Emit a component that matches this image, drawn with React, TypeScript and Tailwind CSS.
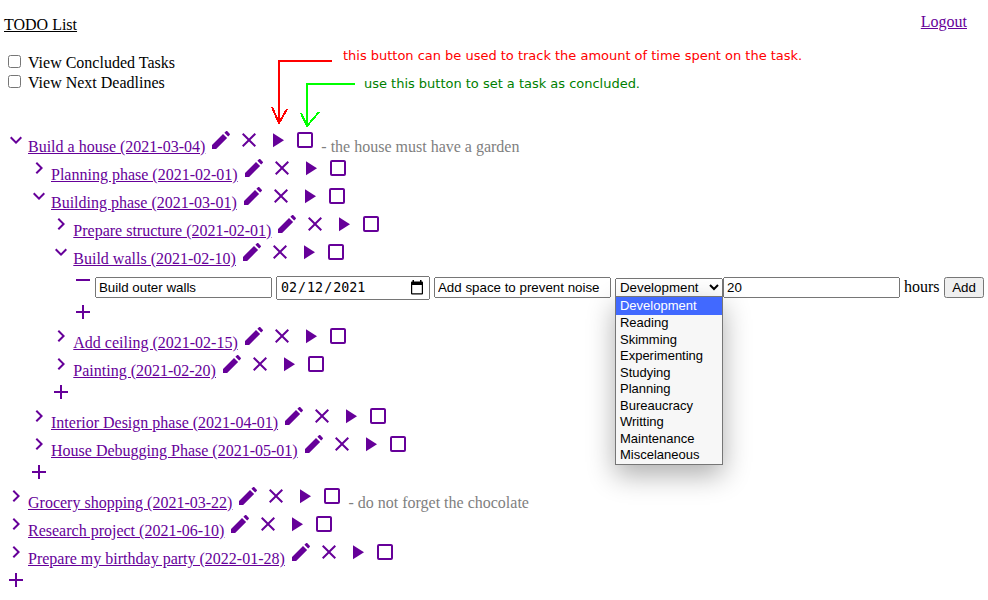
import React from "react";

const PATHS = {
  right: "M8.59,16.58L13.17,12L8.59,7.41L10,6L16,12L10,18L8.59,16.58Z",
  down: "M7.41,8.58L12,13.17L16.59,8.58L18,10L12,16L6,10L7.41,8.58Z",
  pencil:
    "M20.71,7.04C21.1,6.65 21.1,6 20.71,5.63L18.37,3.29C18,2.9 17.35,2.9 16.96,3.29L15.4,4.84L19.15,8.59M3,16.9V21H7.1L18.1,10L14,5.9L3,16.9Z",
  close:
    "M19,6.41L17.59,5L12,10.59L6.41,5L5,6.41L10.59,12L5,17.59L6.41,19L12,13.41L17.59,19L19,17.59L13.41,12L19,6.41Z",
  play: "M8,5.14V19.14L19,12.14L8,5.14Z",
  square:
    "M18,18H6V6H18M18,4H6A2,2 0 0,0 4,6V18A2,2 0 0,0 6,20H18A2,2 0 0,0 20,18V6C20,4.89 19.1,4 18,4Z",
  plus: "M19,13H13V19H11V13H5V11H11V5H13V11H19V13Z",
  minus: "M19,13H5V11H19V13Z",
};

function Icon({ name }: { name: keyof typeof PATHS }) {
  return (
    <svg viewBox="0 0 24 24" className="h-6 w-6 shrink-0 fill-[#660099]">
      <path d={PATHS[name]} />
    </svg>
  );
}

function Task({ title, open, note }: { title: string; open?: boolean; note?: string }) {
  return (
    <div className="flex h-7 items-start whitespace-nowrap">
      <Icon name={open ? "down" : "right"} />
      <a className="mt-[10px] text-[#660099] underline">{title}</a>
      <div className="ml-1 flex gap-1">
        <Icon name="pencil" />
        <Icon name="close" />
        <Icon name="play" />
        <Icon name="square" />
      </div>
      {note && <span className="mt-[10px] ml-1 text-[#808080]">{note}</span>}
    </div>
  );
}

function AddRow() {
  return (
    <div className="flex h-6">
      <Icon name="plus" />
    </div>
  );
}

const OPTIONS = [
  "Development",
  "Reading",
  "Skimming",
  "Experimenting",
  "Studying",
  "Planning",
  "Bureaucracy",
  "Writting",
  "Maintenance",
  "Miscelaneous",
];

function KindSelect() {
  return (
    <div className="relative mt-[10px] ml-1 w-[108px] shrink-0">
      <select className="[all:revert] block! w-[108px]! m-0!" defaultValue="Development">
        {OPTIONS.map((o) => (
          <option key={o}>{o}</option>
        ))}
      </select>
      <div className="absolute top-[18px] left-0 z-10 w-[108px] border border-[#767676] bg-[#f7f7f7] font-['Liberation_Sans',Arial,sans-serif] text-[13px] shadow-[0_10px_26px_rgba(0,0,0,0.32)]">
        {OPTIONS.map((o, i) => (
          <div
            key={o}
            className={
              i === 0
                ? "h-[18px] bg-[#4169ff] pl-1 leading-[18px] text-white"
                : "h-[16.5px] pl-1 leading-[16.5px] text-black"
            }
          >
            {o}
          </div>
        ))}
      </div>
    </div>
  );
}

function DateField() {
  return (
    <div className="relative mt-2 ml-1 h-6 w-[154px] shrink-0">
      <input
        type="date"
        className="[all:revert] m-0! block! h-[24px]! w-[154px]! box-border! pl-[2px]! [&::-webkit-calendar-picker-indicator]:opacity-0"
        defaultValue="2021-02-12"
      />
      <svg viewBox="0 0 12 15" className="pointer-events-none absolute top-1 left-[135px] h-[15px] w-3">
        <path
          fill="#000"
          fillRule="evenodd"
          d="M1.5 0H3V1.5H9V0H10.5V1.5H11Q12 1.5 12 2.5V13.5Q12 14.5 11 14.5H1Q0 14.5 0 13.5V2.5Q0 1.5 1 1.5H1.5ZM1.2 5V13.3H10.8V5Z"
        />
      </svg>
    </div>
  );
}

function EditRow() {
  return (
    <div className="flex h-8 items-start whitespace-nowrap">
      <Icon name="minus" />
      <input className="[all:revert] mt-[9px]! h-[21px]! w-[177px]! box-border! shrink-0!" defaultValue="Build outer walls" />
      <DateField />
      <input className="[all:revert] mt-[9px]! ml-1! h-[21px]! w-[177px]! box-border! shrink-0!" defaultValue="Add space to prevent noise" />
      <KindSelect />
      <input className="[all:revert] mt-[9px]! h-[21px]! w-[177px]! box-border! shrink-0!" defaultValue="20" />
      <span className="mt-[10px] ml-1">hours</span>
      <button className="[all:revert] mt-[9px]! ml-[4.5px]! h-[21px]! w-[40px]! shrink-0!">Add</button>
    </div>
  );
}

function Arrows() {
  return (
    <svg
      className="pointer-events-none absolute top-[50px] left-[265px] h-20 w-[100px]"
      viewBox="265 50 100 80"
      fill="none"
      strokeWidth="2"
      shapeRendering="crispEdges"
    >
      <path stroke="#ff0000" d="M332 61H279V123M272 107L279 123L287 109" />
      <path stroke="#00ff00" d="M355 84H307V126M301 113L307 126L319 112" />
    </svg>
  );
}

export default function App() {
  return (
    <div className="relative h-[600px] w-[988px] overflow-hidden bg-white font-['Liberation_Serif','Times_New_Roman',serif] text-[16px] leading-[18px] text-black">
      <header className="flex h-[52px] items-start justify-between pr-[21px] pl-1">
        <h1 className="mt-4 underline">TODO List</h1>
        <a className="mt-[13px] text-[#660099] underline">Logout</a>
      </header>

      <div className="flex h-[76px] flex-col pt-[2px] pl-2">
        <label className="flex h-5 items-start">
          <input type="checkbox" className="[all:revert] mt-[1px]! mr-[7px]! mb-0! ml-0!" />
          View Concluded Tasks
        </label>
        <label className="flex h-5 items-start">
          <input type="checkbox" className="[all:revert] mt-[1px]! mr-[7px]! mb-0! ml-0!" />
          View Next Deadlines
        </label>
      </div>

      <main className="pl-1">
        <Task title="Build a house (2021-03-04)" open note="- the house must have a garden" />
        <div className="pl-[23px]">
          <Task title="Planning phase (2021-02-01)" />
          <Task title="Building phase (2021-03-01)" open />
          <div className="pl-[22.3px]">
            <Task title="Prepare structure (2021-02-01)" />
            <Task title="Build walls (2021-02-10)" open />
            <div className="pl-[21.7px]">
              <EditRow />
              <AddRow />
            </div>
            <Task title="Add ceiling (2021-02-15)" />
            <Task title="Painting (2021-02-20)" />
            <AddRow />
          </div>
          <Task title="Interior Design phase (2021-04-01)" />
          <Task title="House Debugging Phase (2021-05-01)" />
          <AddRow />
        </div>
        <Task title="Grocery shopping (2021-03-22)" note="- do not forget the chocolate" />
        <Task title="Research project (2021-06-10)" />
        <Task title="Prepare my birthday party (2022-01-28)" />
        <AddRow />
      </main>

      <Arrows />
      <p className="absolute top-[47px] left-[343px] font-['DejaVu_Sans',sans-serif] text-[13px] tracking-[-0.015px] whitespace-nowrap text-[#ff0000]">
        this button can be used to track the amount of time spent on the task.
      </p>
      <p className="absolute top-[75px] left-[364px] font-['DejaVu_Sans',sans-serif] text-[13px] tracking-[-0.015px] whitespace-nowrap text-[#008000]">
        use this button to set a task as concluded.
      </p>
    </div>
  );
}
